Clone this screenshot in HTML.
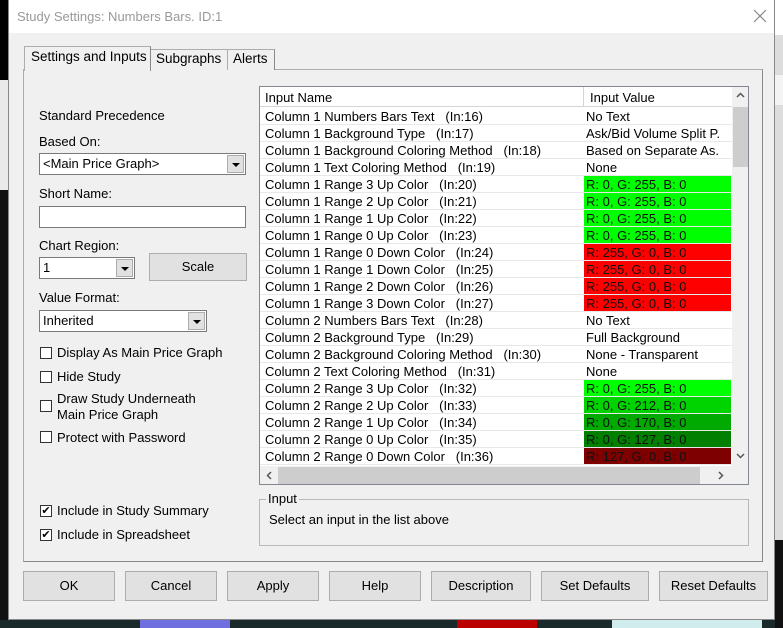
<!DOCTYPE html>
<html><head><style>
*{box-sizing:border-box;margin:0;padding:0}
body{width:783px;height:628px;position:relative;overflow:hidden;background:#f0f0f0;font-family:"Liberation Sans",sans-serif;font-size:13px;color:#000}
.a{position:absolute}
.btn{position:absolute;background:#e1e1e1;border:1px solid #adadad;text-align:center;line-height:28px;font-size:13px}
.cb{position:absolute;width:12px;height:12px;border:1px solid #333;background:#fff}
.combo{position:absolute;background:#fff;border:1px solid #7a7a7a;height:22px;line-height:20px;padding-left:3px}
.combo .ar{position:absolute;right:1px;top:1px;width:17px;height:18px;background:#e1e1e1;border:1px solid #adadad}
.combo .ar:after{content:"";position:absolute;left:4px;top:7px;border-left:4px solid transparent;border-right:4px solid transparent;border-top:4px solid #000}
.row{position:absolute;left:0;width:472px;height:17px;border-bottom:1px solid #e8e8e8;line-height:17px;white-space:nowrap}
.row .n{position:absolute;left:5px}
.row .v{position:absolute;left:324px;width:147px;height:16px;padding-left:2px}
.row .v.c{color:#111}
</style></head><body>
<div class="a" style="left:0;top:0;width:8px;height:80px;background:#000"></div>
<div class="a" style="left:0;top:80px;width:8px;height:110px;background:#eaeaea"></div>
<div class="a" style="left:0;top:190px;width:8px;height:438px;background:#111"></div>
<div class="a" style="left:0;top:620px;width:783px;height:8px;background:#1a2a2a"></div>
<div class="a" style="left:140px;top:620px;width:90px;height:8px;background:#6f6fe0"></div>
<div class="a" style="left:457px;top:620px;width:80px;height:8px;background:#b00"></div>
<div class="a" style="left:612px;top:620px;width:150px;height:8px;background:#d0ecec"></div>
<div class="a" style="left:775px;top:0;width:8px;height:628px;background:#ddd"></div>
<div class="a" style="left:775px;top:0;width:8px;height:35px;background:#fff"></div>
<div class="a" style="left:775px;top:75px;width:8px;height:30px;background:#f4f4f4"></div>
<div class="a" style="left:775px;top:540px;width:8px;height:88px;background:#111"></div>
<div class="a" style="left:8px;top:0;width:767px;height:620px;background:#f0f0f0;border:1px solid #888;border-top:none"></div>
<div class="a" style="left:9px;top:0;width:765px;height:33px;background:#fff"></div>
<div class="a" style="left:17px;top:9px;color:#999;font-size:13px">Study Settings: Numbers Bars. ID:1</div>
<svg class="a" style="left:753px;top:9px" width="14" height="14"><path d="M1 1L13 13M13 1L1 13" stroke="#888" stroke-width="1.2"/></svg>
<div class="a" style="left:23px;top:69px;width:740px;height:493px;border:1px solid #adadad;border-right-color:#888;border-bottom-color:#888"></div>
<div class="a" style="left:150px;top:49px;width:78px;height:21px;border:1px solid #adadad;border-bottom:none;border-right-color:#888;background:#f0f0f0"></div>
<div class="a" style="left:156px;top:51px;font-size:13.5px">Subgraphs</div>
<div class="a" style="left:227px;top:49px;width:48px;height:21px;border:1px solid #adadad;border-bottom:none;border-right-color:#888;background:#f0f0f0"></div>
<div class="a" style="left:233px;top:51px;font-size:13.5px">Alerts</div>
<div class="a" style="left:24px;top:46px;width:127px;height:25px;border:1px solid #adadad;border-bottom:none;border-right-color:#888;background:#f0f0f0"></div>
<div class="a" style="left:31px;top:49px;font-size:13.5px">Settings and Inputs</div>
<div class="a" style="left:39px;top:108px">Standard Precedence</div>
<div class="a" style="left:39px;top:134px">Based On:</div>
<div class="combo" style="left:39px;top:153px;width:207px">&lt;Main Price Graph&gt;<div class="ar"></div></div>
<div class="a" style="left:39px;top:186px">Short Name:</div>
<div class="a" style="left:39px;top:206px;width:207px;height:22px;background:#fff;border:1px solid #7a7a7a"></div>
<div class="a" style="left:39px;top:238px">Chart Region:</div>
<div class="combo" style="left:39px;top:257px;width:96px">1<div class="ar"></div></div>
<div class="btn" style="left:149px;top:253px;width:98px;height:28px;line-height:26px">Scale</div>
<div class="a" style="left:39px;top:290px">Value Format:</div>
<div class="combo" style="left:39px;top:310px;width:168px">Inherited<div class="ar"></div></div>
<div class="cb" style="left:40px;top:347px"></div><div class="a" style="left:57px;top:345px">Display As Main Price Graph</div>
<div class="cb" style="left:40px;top:371px"></div><div class="a" style="left:57px;top:369px">Hide Study</div>
<div class="cb" style="left:40px;top:400px"></div><div class="a" style="left:57px;top:391px;line-height:16px">Draw Study Underneath<br>Main Price Graph</div>
<div class="cb" style="left:40px;top:431px"></div><div class="a" style="left:57px;top:430px">Protect with Password</div>
<div class="cb" style="left:40px;top:505px;font-size:11px;line-height:10px;text-align:center">✔</div><div class="a" style="left:57px;top:503px">Include in Study Summary</div>
<div class="cb" style="left:40px;top:529px;font-size:11px;line-height:10px;text-align:center">✔</div><div class="a" style="left:57px;top:527px">Include in Spreadsheet</div>
<div class="a" style="left:259px;top:86px;width:490px;height:399px;background:#fff;border:1px solid #828790;overflow:hidden">
 <div class="a" style="left:0;top:0;width:472px;height:20px;border-bottom:1px solid #d5d5d5">
  <div class="a" style="left:5px;top:3px">Input Name</div>
  <div class="a" style="left:323px;top:0;width:1px;height:20px;background:#d5d5d5"></div>
  <div class="a" style="left:330px;top:3px">Input Value</div>
 </div>
 <div class="a" style="left:0;top:21px;width:472px;height:358px">
 <div class="row" style="top:0"><span class="n">Column 1 Numbers Bars Text&nbsp;&nbsp; (In:16)</span><span class="v">No Text</span></div>
 <div class="row" style="top:17px"><span class="n">Column 1 Background Type&nbsp;&nbsp; (In:17)</span><span class="v">Ask/Bid Volume Split P.</span></div>
 <div class="row" style="top:34px"><span class="n">Column 1 Background Coloring Method&nbsp;&nbsp; (In:18)</span><span class="v">Based on Separate As.</span></div>
 <div class="row" style="top:51px"><span class="n">Column 1 Text Coloring Method&nbsp;&nbsp; (In:19)</span><span class="v">None</span></div>
 <div class="row" style="top:68px"><span class="n">Column 1 Range 3 Up Color&nbsp;&nbsp; (In:20)</span><span class="v c" style="background:#00ff00">R: 0, G: 255, B: 0</span></div>
 <div class="row" style="top:85px"><span class="n">Column 1 Range 2 Up Color&nbsp;&nbsp; (In:21)</span><span class="v c" style="background:#00ff00">R: 0, G: 255, B: 0</span></div>
 <div class="row" style="top:102px"><span class="n">Column 1 Range 1 Up Color&nbsp;&nbsp; (In:22)</span><span class="v c" style="background:#00ff00">R: 0, G: 255, B: 0</span></div>
 <div class="row" style="top:119px"><span class="n">Column 1 Range 0 Up Color&nbsp;&nbsp; (In:23)</span><span class="v c" style="background:#00ff00">R: 0, G: 255, B: 0</span></div>
 <div class="row" style="top:136px"><span class="n">Column 1 Range 0 Down Color&nbsp;&nbsp; (In:24)</span><span class="v c" style="background:#ff0000">R: 255, G: 0, B: 0</span></div>
 <div class="row" style="top:153px"><span class="n">Column 1 Range 1 Down Color&nbsp;&nbsp; (In:25)</span><span class="v c" style="background:#ff0000">R: 255, G: 0, B: 0</span></div>
 <div class="row" style="top:170px"><span class="n">Column 1 Range 2 Down Color&nbsp;&nbsp; (In:26)</span><span class="v c" style="background:#ff0000">R: 255, G: 0, B: 0</span></div>
 <div class="row" style="top:187px"><span class="n">Column 1 Range 3 Down Color&nbsp;&nbsp; (In:27)</span><span class="v c" style="background:#ff0000">R: 255, G: 0, B: 0</span></div>
 <div class="row" style="top:204px"><span class="n">Column 2 Numbers Bars Text&nbsp;&nbsp; (In:28)</span><span class="v">No Text</span></div>
 <div class="row" style="top:221px"><span class="n">Column 2 Background Type&nbsp;&nbsp; (In:29)</span><span class="v">Full Background</span></div>
 <div class="row" style="top:238px"><span class="n">Column 2 Background Coloring Method&nbsp;&nbsp; (In:30)</span><span class="v">None - Transparent</span></div>
 <div class="row" style="top:255px"><span class="n">Column 2 Text Coloring Method&nbsp;&nbsp; (In:31)</span><span class="v">None</span></div>
 <div class="row" style="top:272px"><span class="n">Column 2 Range 3 Up Color&nbsp;&nbsp; (In:32)</span><span class="v c" style="background:#00ff00">R: 0, G: 255, B: 0</span></div>
 <div class="row" style="top:289px"><span class="n">Column 2 Range 2 Up Color&nbsp;&nbsp; (In:33)</span><span class="v c" style="background:#00d400">R: 0, G: 212, B: 0</span></div>
 <div class="row" style="top:306px"><span class="n">Column 2 Range 1 Up Color&nbsp;&nbsp; (In:34)</span><span class="v c" style="background:#00aa00">R: 0, G: 170, B: 0</span></div>
 <div class="row" style="top:323px"><span class="n">Column 2 Range 0 Up Color&nbsp;&nbsp; (In:35)</span><span class="v c" style="background:#007f00">R: 0, G: 127, B: 0</span></div>
 <div class="row" style="top:340px"><span class="n">Column 2 Range 0 Down Color&nbsp;&nbsp; (In:36)</span><span class="v c" style="background:#7f0000">R: 127, G: 0, B: 0</span></div>
 </div>
 <div class="a" style="left:472px;top:0;width:17px;height:379px;background:#f0f0f0"></div>
 <div class="a" style="left:473px;top:20px;width:15px;height:60px;background:#cdcdcd"></div>
 <svg class="a" style="left:476px;top:5px" width="9" height="6"><path d="M1 5L4.5 1.5L8 5" stroke="#555" stroke-width="1.5" fill="none"/></svg>
 <svg class="a" style="left:476px;top:366px" width="9" height="6"><path d="M1 1L4.5 4.5L8 1" stroke="#555" stroke-width="1.5" fill="none"/></svg>
 <div class="a" style="left:0;top:379px;width:489px;height:19px;background:#f0f0f0"></div>
 <div class="a" style="left:18px;top:380px;width:422px;height:17px;background:#cdcdcd"></div>
 <svg class="a" style="left:6px;top:384px" width="6" height="9"><path d="M5 1L1.5 4.5L5 8" stroke="#555" stroke-width="1.5" fill="none"/></svg>
 <svg class="a" style="left:458px;top:384px" width="6" height="9"><path d="M1 1L4.5 4.5L1 8" stroke="#555" stroke-width="1.5" fill="none"/></svg>
</div>
<div class="a" style="left:259px;top:499px;width:490px;height:47px;border:1px solid #b8b8b8"></div>
<div class="a" style="left:266px;top:491px;background:#f0f0f0;padding:0 2px">Input</div>
<div class="a" style="left:269px;top:512px">Select an input in the list above</div>
<div class="btn" style="left:23px;top:571px;width:92px;height:30px">OK</div>
<div class="btn" style="left:125px;top:571px;width:92px;height:30px">Cancel</div>
<div class="btn" style="left:227px;top:571px;width:92px;height:30px">Apply</div>
<div class="btn" style="left:329px;top:571px;width:92px;height:30px">Help</div>
<div class="btn" style="left:431px;top:571px;width:100px;height:30px">Description</div>
<div class="btn" style="left:541px;top:571px;width:108px;height:30px">Set Defaults</div>
<div class="btn" style="left:659px;top:571px;width:109px;height:30px">Reset Defaults</div>
</body></html>
